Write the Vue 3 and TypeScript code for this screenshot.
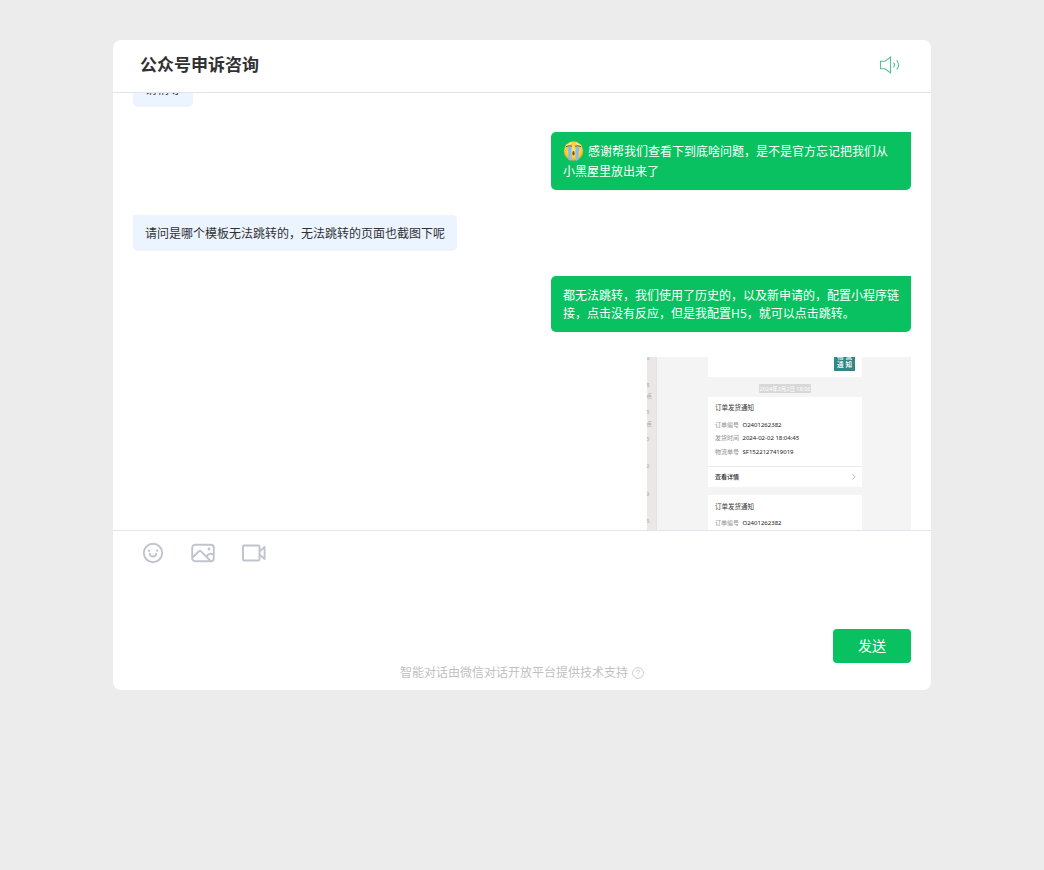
<script setup lang="ts">
import { onMounted, ref } from 'vue'

interface Message {
  id: number
  side: 'agent' | 'user'
  text?: string
  crying?: boolean
  picture?: boolean
}

const messages: Message[] = [
  { id: 1, side: 'agent', text: '请稍等' },
  { id: 2, side: 'user', text: '感谢帮我们查看下到底啥问题，是不是官方忘记把我们从小黑屋里放出来了', crying: true },
  { id: 3, side: 'agent', text: '请问是哪个模板无法跳转的，无法跳转的页面也截图下呢' },
  { id: 4, side: 'user', text: '都无法跳转，我们使用了历史的，以及新申请的，配置小程序链接，点击没有反应，但是我配置H5，就可以点击跳转。' },
  { id: 5, side: 'user', picture: true },
]

const strip = [
  { y: 6, t: '6' }, { y: 60, t: '8' }, { y: 82, t: '点' }, { y: 114, t: '5' }, { y: 138, t: '点' },
  { y: 168, t: '5' }, { y: 222, t: '2' }, { y: 278, t: '9' }, { y: 332, t: '5' },
]

const log = ref<HTMLElement | null>(null)
const draft = ref('')

onMounted(() => {
  if (log.value) log.value.scrollTop = 22
})
</script>

<template>
  <div class="page">
    <main class="chat">
      <header class="head">
        <h1>公众号申诉咨询</h1>
        <button class="icon" type="button" aria-label="声音">
          <svg width="22" height="20" viewBox="0 0 22 20" fill="none" stroke="#56bf94" stroke-width="1.1">
            <path d="M1.5 6.2H6L11.5 2V18L6 13.8H1.5Z" />
            <path d="M14.5 7.6Q16.4 10 14.5 12.4M17.8 5.4Q21.4 10 17.8 14.6" />
          </svg>
        </button>
      </header>

      <section ref="log" class="log">
        <div v-for="m in messages" :key="m.id" class="row" :class="m.side">
          <svg v-if="m.picture" class="shot" viewBox="0 0 528 400" role="img" aria-label="订单发货通知截图">
            <rect width="528" height="400" fill="#f4f4f4" />
            <rect width="18" height="400" fill="#ebe7e6" />
            <rect x="18" width="2" height="400" fill="#e4e2e2" />
            <g font-size="12" fill="#aaa5a5">
              <text v-for="s in strip" :key="s.y" x="-2" :y="s.y">{{ s.t }}</text>
            </g>
            <rect x="122" width="308" height="40" fill="#fff" />
            <rect x="374" width="42" height="28" fill="#348584" />
            <g font-size="13" font-weight="700" fill="#e9f5f4">
              <text x="380" y="4">物</text><text x="397" y="4">流</text>
              <text x="380" y="20">通</text><text x="397" y="20">知</text>
            </g>
            <rect x="224" y="54" width="104" height="18" rx="2" fill="#d8d8d8" />
            <text x="276" y="67" font-size="11" text-anchor="middle" fill="#fff">2024年2月2日 18:06</text>

            <rect x="122" y="80" width="308" height="180" fill="#fff" />
            <text x="136" y="106" font-size="13" fill="#333">订单发货通知</text>
            <g font-size="12" fill="#909090">
              <text x="136" y="139">订单编号</text>
              <text x="136" y="166">发货时间</text>
              <text x="136" y="194">物流单号</text>
            </g>
            <g font-size="12" fill="#222">
              <text x="191" y="139">O2401262382</text>
              <text x="191" y="166">2024-02-02 18:04:45</text>
              <text x="191" y="194">SF1522127419019</text>
            </g>
            <path d="M122 219H430" stroke="#ececec" stroke-width="2" />
            <text x="136" y="244" font-size="12" fill="#222" font-weight="500">查看详情</text>
            <path d="M411 234L416 239.500L411 245" fill="none" stroke="#bbb" stroke-width="2" />

            <rect x="122" y="276" width="308" height="124" fill="#fff" />
            <text x="136" y="303" font-size="13" fill="#333">订单发货通知</text>
            <text x="136" y="336" font-size="12" fill="#909090">订单编号</text>
            <text x="191" y="336" font-size="12" fill="#222">O2401262382</text>
          </svg>
          <p v-else class="bubble">
            <svg v-if="m.crying" class="emoji" viewBox="0 0 20 20" role="img" aria-label="大哭">
              <defs>
                <radialGradient id="face" cx="50%" cy="45%" r="55%">
                  <stop offset="0" stop-color="#ffe56a" />
                  <stop offset="0.75" stop-color="#fdcb35" />
                  <stop offset="1" stop-color="#ec9e22" />
                </radialGradient>
              </defs>
              <circle cx="10" cy="10" r="9.700" fill="url(#face)" />
              <path d="M4 5.200H8V18.800Q7.600 20 6.400 19.500L4.800 18.500Q5.200 11 4 7.500ZM16 5.200H12V18.800Q12.400 20 13.600 19.500L15.200 18.500Q14.800 11 16 7.500Z" fill="#86bdec" />
              <path d="M1.800 4Q5 3.800 7.300 1.500L8 2.500Q5.500 4.600 3 5ZM18.200 4Q15 3.800 12.700 1.500L12 2.500Q14.500 4.600 17 5Z" fill="#fff0a8" />
              <path d="M2.500 5.600Q6 4 8.500 5.200M17.500 5.600Q14 4 11.500 5.200" stroke="#7a5a2c" stroke-width="1" fill="none" />
              <ellipse cx="10" cy="12.300" rx="1.100" ry="2.200" fill="#8a4a0f" />
            </svg>{{ m.text }}
          </p>
        </div>
      </section>

      <form class="composer" @submit.prevent>
        <div class="tools">
          <button class="icon" type="button" aria-label="表情">
            <svg width="22" height="22" viewBox="0 0 22 22" fill="none" stroke="#c0c4cc" stroke-width="1.900" stroke-linecap="round">
              <circle cx="11" cy="11" r="9.200" />
              <path d="M7.800 11.700Q8 14.500 11 14.500T14.200 11.700" />
              <circle cx="7" cy="8.700" r="1.100" fill="#c0c4cc" stroke="none" />
              <circle cx="15" cy="8.700" r="1.100" fill="#c0c4cc" stroke="none" />
            </svg>
          </button>
          <button class="icon" type="button" aria-label="图片">
            <svg width="24" height="20" viewBox="0 0 24 20" fill="none" stroke="#c0c4cc" stroke-width="1.900" stroke-linejoin="round">
              <rect x="1.200" y="1.700" width="21.600" height="16.600" rx="3" />
              <path d="M1.500 14.500L8 8.300Q9 7.400 10 8.300L19.500 18M15.500 13.500Q18 9 22.500 11.800" />
              <circle cx="18" cy="6" r="1.400" fill="#c0c4cc" stroke="none" />
            </svg>
          </button>
          <button class="icon" type="button" aria-label="视频">
            <svg width="24" height="18" viewBox="0 0 24 18" fill="none" stroke="#c0c4cc" stroke-width="1.900" stroke-linejoin="round">
              <rect x="1" y="1.500" width="16.500" height="15" rx="1" />
              <path d="M17.500 7.500L22.600 3V15L17.500 10.500" />
            </svg>
          </button>
        </div>
        <textarea v-model="draft" aria-label="输入消息"></textarea>
        <button class="send" type="submit">发送</button>
        <p class="credit">
          <span>智能对话由微信对话开放平台提供技术支持</span>
          <svg width="12" height="12" viewBox="0 0 12 12" fill="none" stroke="#c8c8c8" stroke-width="0.900">
            <circle cx="6" cy="6" r="5.400" />
            <path d="M4.300 4.700Q4.300 3 6 3T7.700 4.600Q7.700 5.300 6.700 5.900Q6 6.300 6 7.200M6 8.300V9.200" />
          </svg>
        </p>
      </form>
    </main>
  </div>
</template>

<style>
body {
  margin: 0;
  background: #ececec;
}
</style>

<style scoped>
.page {
  box-sizing: border-box;
  min-height: 100vh;
  padding: 40px 113px;
  background: #ececec;
  font-family: "Noto Sans", "Noto Sans CJK SC", sans-serif;
  color: #303133;
}
.chat {
  display: flex;
  flex-direction: column;
  background: #fff;
  border-radius: 8px;
  overflow: hidden;
}
.head {
  display: flex;
  align-items: center;
  justify-content: space-between;
  padding: 0 30px 2px 27px;
  border-bottom: 1px solid #e1e4ec;
}
h1 {
  margin: 0;
  font-size: 17px;
  line-height: 50px;
  font-weight: 700;
}
.icon {
  display: flex;
  padding: 0;
  border: 0;
  background: none;
  cursor: pointer;
}
.log {
  display: flex;
  flex-direction: column;
  gap: 25px;
  height: 437px;
  padding: 0 20px;
  overflow-y: auto;
  scrollbar-width: none;
}
.row {
  display: flex;
  flex: none;
}
.user {
  justify-content: flex-end;
}
.bubble {
  box-sizing: border-box;
  max-width: 360px;
  margin: 0;
  padding: 10px 12px 8px;
  border-radius: 0 5px 5px 5px;
  background: #ecf4ff;
  font-size: 12px;
  line-height: 18px;
}
.user .bubble {
  padding: 11px 12px 9px;
  border-radius: 5px 0 5px 5px;
  background: #09c160;
  color: #fff;
}
.emoji {
  width: 21px;
  height: 20px;
  margin: -2px 4px 2px 0;
  vertical-align: middle;
}
.shot {
  display: block;
  width: 264px;
}
.composer {
  display: flex;
  flex-direction: column;
  padding: 0 20px 8px;
  border-top: 1px solid #e1e4ec;
}
.tools {
  display: flex;
  align-items: center;
  gap: 27px;
  height: 44px;
  padding-left: 9px;
}
textarea {
  height: 54px;
  padding: 0;
  border: 0;
  outline: 0;
  resize: none;
  font: inherit;
  font-size: 14px;
}
.send {
  align-self: flex-end;
  width: 78px;
  height: 34px;
  padding: 0 0 2px;
  border: 0;
  border-radius: 4px;
  background: #09c160;
  color: #fff;
  font: inherit;
  font-size: 14px;
  cursor: pointer;
}
.credit {
  display: flex;
  align-items: center;
  justify-content: center;
  gap: 4px;
  margin: 0;
  font-size: 12px;
  line-height: 19px;
  color: #bfbfbf;
}
</style>
